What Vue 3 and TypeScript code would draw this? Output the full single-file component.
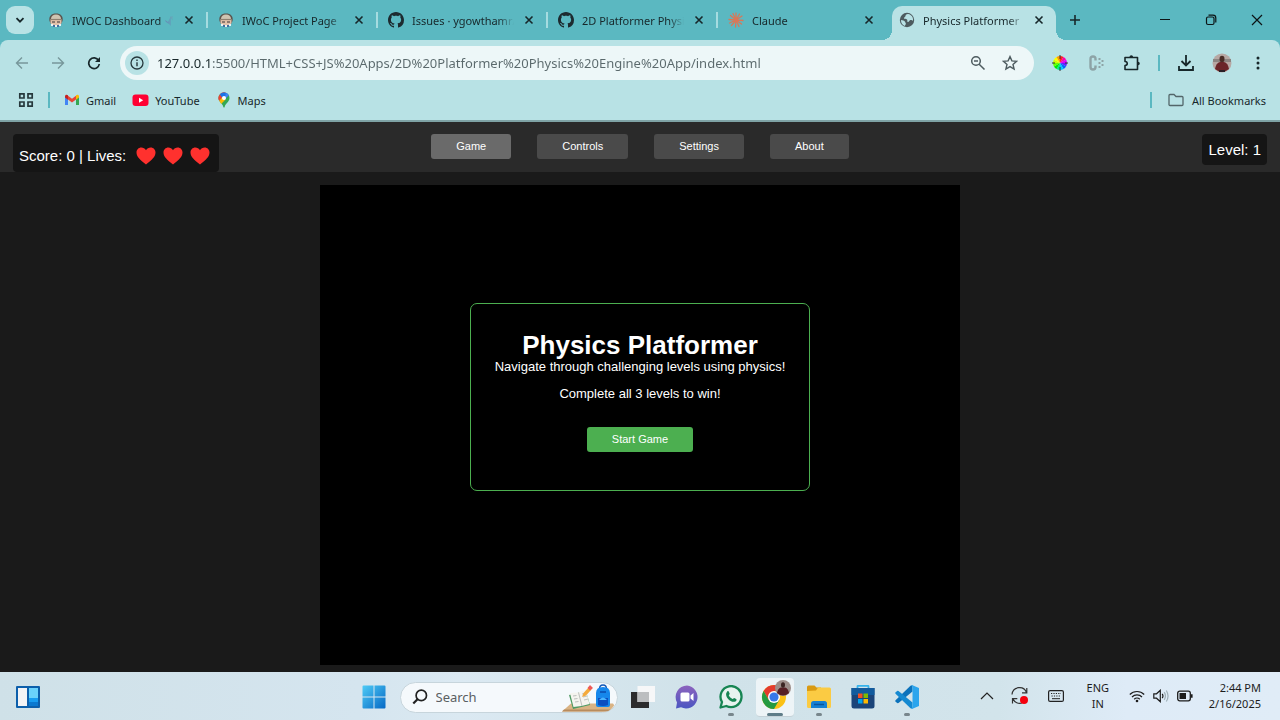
<script setup lang="ts">
import { ref } from 'vue'

interface Tab {
  title: string
  icon: 'iwoc' | 'github' | 'claude' | 'globe'
  party?: boolean
}

const tabs: Tab[] = [
  { title: 'IWOC Dashboard', icon: 'iwoc', party: true },
  { title: 'IWoC Project Page', icon: 'iwoc' },
  { title: 'Issues · ygowthamr/JS-Apps', icon: 'github' },
  { title: '2D Platformer Physics Engine', icon: 'github' },
  { title: 'Claude', icon: 'claude' },
  { title: 'Physics Platformer', icon: 'globe' },
]
const activeTab = ref(5)

const url = ref('127.0.0.1:5500/HTML+CSS+JS%20Apps/2D%20Platformer%20Physics%20Engine%20App/index.html')
const search = ref('')

const sections = ['Game', 'Controls', 'Settings', 'About']
const section = ref('Game')
const score = ref(0)
const lives = ref(3)
const level = ref(1)

const wheel = ['#f22', '#f0a', '#d0f', '#62f', '#06f', '#0cf', '#0e8', '#0e0', '#6f0', '#cf0', '#ff0', '#f90']
function wedge(i: number): string {
  const a = (i * Math.PI) / 6
  const b = ((i + 1) * Math.PI) / 6
  return `M8 8L${8 + 7 * Math.sin(a)} ${8 - 7 * Math.cos(a)}A7 7 0 0 1 ${8 + 7 * Math.sin(b)} ${8 - 7 * Math.cos(b)}Z`
}
</script>

<template>
  <div class="desktop">
    <header class="browser">
      <div class="tabstrip">
        <button class="tab-search" aria-label="Search tabs">
          <svg width="12" height="12" viewBox="0 0 12 12"><path d="M2.5 4.2L6 7.7l3.5-3.5" fill="none" stroke="#17272a" stroke-width="1.8" /></svg>
        </button>
        <div class="tabs">
          <div v-for="(t, i) in tabs" :key="i" class="tab" :class="{ active: i === activeTab, divided: i < tabs.length - 2 }">
            <button class="tab-main" @click="activeTab = i">
              <svg v-if="t.icon === 'iwoc'" class="fav" viewBox="0 0 16 16">
                <path d="M1.500 9C.5 4 3.500 1.500 8 1.500S15.500 4 14.500 9l-1.500 3H3z" fill="#5a534d" />
                <path d="M3 7c0-3 2-4.500 5-4.500S13 4 13 7z" fill="#cfc4b2" />
                <path d="M2.500 7.500h11v3.500c-1 2-3 3-5.500 3s-4.500-1-5.500-3z" fill="#e3c0a8" />
                <path d="M2 7.500h12" stroke="#8f8070" stroke-width="1.200" />
                <path d="M4 10h3M9 10h3" stroke="#393439" stroke-width="1.200" />
                <path d="M3 12h2v2H3zM7 13h2v2H7zM11 12h2v2h-2z" fill="#e9f1f3" />
                <path d="M5 13h2v2H5zM9 13h2v2H9z" fill="#416fa0" />
              </svg>
              <svg v-else-if="t.icon === 'github'" class="fav" viewBox="0 0 16 16">
                <path fill="#1d2b30" d="M8 0C3.580 0 0 3.580 0 8c0 3.540 2.290 6.530 5.470 7.590.4.070.55-.17.55-.38 0-.19-.01-.82-.01-1.490-2.010.37-2.530-.49-2.690-.94-.09-.23-.48-.94-.82-1.130-.28-.15-.68-.52-.01-.53.63-.01 1.080.58 1.230.82.72 1.210 1.870.87 2.330.66.07-.52.28-.87.51-1.070-1.780-.2-3.640-.89-3.640-3.950 0-.87.31-1.590.82-2.150-.08-.2-.36-1.020.08-2.120 0 0 .67-.21 2.200.82.64-.18 1.320-.27 2-.27s1.360.09 2 .27c1.530-1.040 2.200-.82 2.200-.82.44 1.100.16 1.920.08 2.120.51.56.82 1.270.82 2.150 0 3.070-1.870 3.750-3.650 3.950.29.25.54.73.54 1.480 0 1.070-.01 1.930-.01 2.200 0 .21.15.46.55.38A8.010 8.010 0 0 0 16 8c0-4.420-3.580-8-8-8z" />
              </svg>
              <svg v-else-if="t.icon === 'claude'" class="fav" viewBox="0 0 16 16">
                <path d="M8 8V1M8 8l3.500-6M8 8l6-4M8 8l7 .5M8 8l5.500 4M8 8l3 6.500M8 8l-.5 7M8 8l-4.500 5.500M8 8l-6.500 3M8 8L1 7.500M8 8L2.500 3.500M8 8L5 1.500" stroke="#d97757" stroke-width="1.300" stroke-linecap="round" />
              </svg>
              <svg v-else class="fav" viewBox="0 0 16 16">
                <circle cx="8" cy="8" r="7.200" fill="#4d5b5f" />
                <path d="M9 2c-2 0-2.500 1-2.500 2S5 5 5 6.200s2 .3 3 1.300-.5 2 .8 2.500 1-1.500 2.200-1.800 2.500.3 3 .8c.5-3-1-6.500-5-7zM2 8c1.500.2 3.500.5 4 1.800s1 1.200.8 2.200-.8 1-1 2C3.500 13 1.800 11 2 8z" fill="#b8e2e5" />
              </svg>
              <span class="tab-title">{{ t.title }}<svg v-if="t.party" class="party" viewBox="0 0 10 12"><path d="M0 5l3 2 3-6v10L4 9 1 7z" fill="#7361ab" /><path d="M5 2l3-1v5z" fill="#a14f8d" /></svg></span>
            </button>
            <button class="tab-close" aria-label="Close tab">
              <svg width="10" height="10" viewBox="0 0 10 10"><path d="M1.500 1.500l7 7M8.500 1.500l-7 7" stroke="#17272a" stroke-width="1.600" /></svg>
            </button>
          </div>
        </div>
        <button class="new-tab" aria-label="New tab">
          <svg width="12" height="12" viewBox="0 0 12 12"><path d="M6 1v10M1 6h10" stroke="#17272a" stroke-width="1.600" /></svg>
        </button>
        <div class="window-controls">
          <button aria-label="Minimize"><svg width="12" height="12" viewBox="0 0 12 12"><path d="M1 5.500h10" stroke="#0c1416" /></svg></button>
          <button aria-label="Restore"><svg width="12" height="12" viewBox="0 0 12 12" fill="none" stroke="#0c1416" stroke-width="1.200"><rect x="1.500" y="3" width="7.500" height="7.500" rx="1.500" /><path d="M3.500 1.200h4.500q2.800 0 2.800 2.800v4.500" /></svg></button>
          <button aria-label="Close window"><svg width="12" height="12" viewBox="0 0 12 12"><path d="M1 1l10 10M11 1L1 11" stroke="#0c1416" stroke-width="1.200" /></svg></button>
        </div>
      </div>

      <div class="toolbar">
        <div class="nav-actions">
          <button aria-label="Back"><svg width="14" height="14" viewBox="0 0 14 14" fill="none" stroke="#77979b" stroke-width="1.400"><path d="M13 7H2M7 1.500L1.500 7 7 12.500" /></svg></button>
          <button aria-label="Forward"><svg width="14" height="14" viewBox="0 0 14 14" fill="none" stroke="#77979b" stroke-width="1.400"><path d="M1 7h11M7 1.500L12.500 7 7 12.500" /></svg></button>
          <button aria-label="Reload"><svg width="14" height="14" viewBox="0 0 14 14"><path d="M11.600 4.500A5.300 5.300 0 1 0 12.300 8" fill="none" stroke="#17272a" stroke-width="1.700" /><path d="M13 1v5H8z" fill="#17272a" /></svg></button>
        </div>
        <div class="omnibox">
          <button class="site-info" aria-label="View site information">
            <svg width="14" height="14" viewBox="0 0 14 14"><circle cx="7" cy="7" r="6" fill="none" stroke="#26383c" stroke-width="1.300" /><path d="M7 6.200v4M7 3.500v1.400" stroke="#26383c" stroke-width="1.400" /></svg>
          </button>
          <input v-model="url" class="url" type="text" aria-label="Address" spellcheck="false" />
          <button aria-label="Zoom"><svg width="16" height="16" viewBox="0 0 16 16" fill="none" stroke="#4d5b5f" stroke-width="1.500"><circle cx="6" cy="6" r="4.300" /><path d="M9.200 9.200l5.300 5.300M4 6h4" /></svg></button>
          <button aria-label="Bookmark this tab"><svg width="16" height="16" viewBox="0 0 16 16"><path d="M8 1.600l1.900 4.300 4.700.4-3.600 3.100 1.100 4.600L8 11.600 3.900 14 5 9.400 1.400 6.300l4.700-.4z" fill="none" stroke="#4d5b5f" stroke-width="1.400" /></svg></button>
        </div>
        <div class="extensions">
          <button aria-label="Color picker"><svg width="16" height="16" viewBox="0 0 16 16"><path v-for="(c, i) in wheel" :key="c" :d="wedge(i)" :fill="c" /><path d="M8 0v4M8 12v4M0 8h3M13 8h3" stroke="#333" /></svg></button>
          <button aria-label="Coding extension"><svg width="16" height="16" viewBox="0 0 16 16"><path d="M7.500 5.500V4Q7.500 1.500 5 1.500T2.500 4v8q0 2.500 2.500 2.500T7.500 12v-1.500" fill="none" stroke="#8da3a6" stroke-width="2.400" /><path d="M10.500 4h2M10.500 8h2M10.500 12h2M13.500 6h2M13.500 10h2" stroke="#8da3a6" stroke-width="2" /></svg></button>
          <button aria-label="Extensions"><svg width="18" height="18" viewBox="0 0 18 18"><path d="M2 3.500h12.500v12H2v-4c3-.2 3-3.800 0-4z" fill="none" stroke="#17272a" stroke-width="1.600" stroke-linejoin="round" /><path d="M6.500 3a1.800 1.800 0 0 1 3.600 0zM15 7.700a1.800 1.800 0 0 1 0 3.600z" fill="#17272a" /></svg></button>
          <span class="rule"></span>
          <button aria-label="Downloads"><svg width="18" height="18" viewBox="0 0 18 18" fill="none" stroke="#17272a" stroke-width="1.800"><path d="M9 1v10M4.500 7L9 11.500 13.500 7M2 12v4h14v-4" /></svg></button>
          <button aria-label="Profile">
            <svg width="20" height="20" viewBox="0 0 20 20"><circle cx="10" cy="10" r="9.500" fill="#b7a8a4" /><path d="M1 6h18v3H1z" fill="#8d8582" /><path d="M3 16q1-6 5-7h4q4 1 5 7-7 6-14 0z" fill="#6b2529" /><path d="M7 17h6v2H7z" fill="#292026" /><ellipse cx="10" cy="6" rx="2.500" ry="3.300" fill="#4a2d27" /></svg>
          </button>
          <button aria-label="Menu"><svg width="4" height="16" viewBox="0 0 4 16" fill="#17272a"><circle cx="2" cy="3" r="1.500" /><circle cx="2" cy="8" r="1.500" /><circle cx="2" cy="13" r="1.500" /></svg></button>
        </div>
      </div>

      <nav class="bookmarks" aria-label="Bookmarks">
        <button class="apps" aria-label="Apps"><svg width="16" height="16" viewBox="0 0 16 16" fill="none" stroke="#26383c" stroke-width="1.700"><path d="M1.800 1.800h4.200v4.200h-4.200zM10 1.800h4.200v4.200H10zM1.800 10h4.200v4.200h-4.200zM10 10h4.200v4.200H10z" /></svg></button>
        <span class="rule"></span>
        <a href="#gmail" class="bm-gmail"><svg width="16" height="16" viewBox="0 0 16 16"><path d="M1 4v9h3V6z" fill="#4285f4" /><path d="M12 6v7h3V4z" fill="#34a853" /><path d="M4 3.800l4 3 4-3v3.800l-4 3-4-3z" fill="#ea4335" /><path d="M1 4.500C1 2.500 2.800 2.200 4 3.300v4.400L1 5.500z" fill="#c5221f" /><path d="M15 4.500c0-2-1.800-2.300-3-1.200v4.400l3-2.200z" fill="#fbbc04" /></svg>Gmail</a>
        <a href="#youtube" class="bm-youtube"><svg width="17" height="16" viewBox="0 0 17 16"><rect x="0.500" y="2.500" width="16" height="11.500" rx="3" fill="#ff0033" /><path d="M7 5.700v5l4.200-2.500z" fill="#fff" /></svg>YouTube</a>
        <a href="#maps" class="bm-maps"><svg width="16" height="16" viewBox="0 0 16 16"><path d="M8 .5a5.500 5.500 0 0 0-5.500 5.500c0 4 4.500 5.500 4.800 9q.7 1 1.400 0c.3-3.500 4.800-5 4.800-9A5.500 5.500 0 0 0 8 .5z" fill="#34a853" /><path d="M3.300 9L10.500.9A5.500 5.500 0 0 0 3.800 2.400 5.500 5.500 0 0 0 3.300 9z" fill="#ea4335" /><path d="M3.800 2.400A5.500 5.500 0 0 1 12.800 3.300L8 8z" fill="#1a73e8" /><path d="M9.800.7l3 2.600L9 7z" fill="#4285f4" /><path d="M3.300 8.800L6.500 5l3 2.600-4.300 4.300z" fill="#fbbc04" /><circle cx="8" cy="6" r="2" fill="#fff" /></svg>Maps</a>
        <span class="rule push"></span>
        <button class="all"><svg width="16" height="14" viewBox="0 0 16 14"><path d="M1 12V2.500Q1 1.500 2 1.500h4l2 2h6q1 0 1 1V11.500q0 1-1 1H2q-1 0-1-1z" fill="none" stroke="#53666a" stroke-width="1.300" /></svg>All Bookmarks</button>
      </nav>
    </header>

    <main class="page">
      <div class="hud">
        <div class="stat score">
          Score: {{ score }} | Lives:
          <span class="hearts">
            <svg v-for="n in lives" :key="n" viewBox="0 0 20 18"><path d="M10 17.500C4 13 .5 9.800.5 5.600.5 2.800 2.600.6 5.300.6c1.900 0 3.700 1 4.700 2.600 1-1.600 2.800-2.600 4.700-2.600 2.700 0 4.800 2.200 4.800 5 0 4.200-3.500 7.400-9.500 11.900z" fill="#ff312e" /></svg>
          </span>
        </div>
        <nav class="menu" aria-label="Game menu">
          <button v-for="s in sections" :key="s" :class="{ on: s === section }" @click="section = s">{{ s }}</button>
        </nav>
        <div class="stat level">Level: {{ level }}</div>
      </div>
      <canvas class="stage" width="640" height="480"></canvas>
      <div class="overlay">
        <section class="card">
          <h1>Physics Platformer</h1>
          <p>Navigate through challenging levels using physics!</p>
          <p>Complete all 3 levels to win!</p>
          <button class="start">Start Game</button>
        </section>
      </div>
    </main>

    <footer class="taskbar">
      <div class="widgets">
        <button aria-label="Widgets"><svg width="24" height="22" viewBox="0 0 24 22"><rect width="24" height="22" rx="1" fill="#0d5fab" /><path d="M2 2h9v18H2z" fill="#f3f3f5" /><path d="M13 2h9v10h-9z" fill="#6bd2fb" /><path d="M13 12h9v4h-9z" fill="#189df1" /><path d="M13 16h9v4h-9z" fill="#0b79d0" /></svg></button>
      </div>
      <div class="dock">
        <button class="app" aria-label="Start">
          <svg width="24" height="24" viewBox="0 0 24 24"><defs><linearGradient id="win" x1="0" y1="0" x2="1" y2="1"><stop offset="0" stop-color="#4fcbf6" /><stop offset="1" stop-color="#0568c5" /></linearGradient></defs><path d="M1.500.5H11.500V11.500H.5V1.500q0-1 1-1zM12.500.5H22.500q1 0 1 1V11.500H12.500zM.5 12.500H11.500V23.500H1.500q-1 0-1-1zM12.500 12.500H23.500V22.500q0 1-1 1H12.500z" fill="url(#win)" /></svg>
        </button>
        <div class="search">
          <svg class="glass" width="16" height="16" viewBox="0 0 16 16" fill="none" stroke="#222"><circle cx="9.300" cy="6.400" r="5.200" stroke-width="1.700" /><path d="M5.500 10.300L1.300 14.600" stroke-width="2.200" /></svg>
          <input v-model="search" type="text" placeholder="Search" aria-label="Search" />
          <svg class="scene" width="52" height="29" viewBox="0 0 52 29"><path d="M0 28.500l9-8h42q1 1 1 2-2 4-5 6z" fill="#d9b384" /><path d="M0 28.500l2-2h47l-2 2z" fill="#b88b5d" /><path d="M7 12l17-4 4 14-17 4z" fill="#4e9a63" /><path d="M8 10l8-.5 8-2.500 3.500 14-8 2-8 1z" fill="#f5f4ef" /><path d="M16.500 9.500L20 23M11 13l3.500-.5M12 16l3.500-.5M13 19l3.500-.5M20 11l4-1M21 14l4-1M22 17l4-1" stroke="#adb1ae" stroke-width=".8" /><path d="M20 14l1.500-4L27 4l2.500 2.500-5.500 6z" fill="#f4aa3b" /><path d="M25.500 5L28 2l3 3-3 2.500z" fill="#ee5a57" /><path d="M37.500 6q0-4 3.500-4t3.500 4" fill="none" stroke="#1459b8" stroke-width="1.500" /><path d="M34 22V10q0-6 7-6t7 6v12q0 2-2 2H36q-2 0-2-2z" fill="#1687eb" /><path d="M36 15h10v7q-5 2-10 0z" fill="#0d4fc0" /><path d="M37 17q4-5 8 0" fill="#4cb5ff" /><path d="M38 9h6" stroke="#0b4bae" stroke-width="1.500" /></svg>
        </div>
        <button class="app" aria-label="Task view"><svg width="24" height="24" viewBox="0 0 24 24"><path d="M0 7h18v16H0z" fill="#2c2c2d" /><path d="M6.500 1H24v16H6.500z" fill="#f6f7f8" /><path d="M6.500 7H18v10H6.500z" fill="#bcbec0" /></svg></button>
        <button class="app" aria-label="Chat"><svg width="24" height="24" viewBox="0 0 24 24"><defs><linearGradient id="chat" x1="0" y1="0" x2="0" y2="1"><stop offset="0" stop-color="#8d63bd" /><stop offset="1" stop-color="#4b56c2" /></linearGradient></defs><path d="M12 .5A11.500 11.500 0 1 1 6 22.300L1 23.500 2 17.500A11.500 11.500 0 0 1 12 .5z" fill="url(#chat)" /><rect x="5.500" y="7.500" width="9" height="9" rx="1.500" fill="#fff" /><path d="M15.500 10.500l3-2.500v8l-3-2.500z" fill="#fff" /></svg></button>
        <button class="app open" aria-label="WhatsApp"><svg width="24" height="24" viewBox="0 0 24 24"><path d="M1.500 22.500l1.500-5.500A10.500 10.500 0 1 1 7.300 21z" fill="#e7f3ef" stroke="#178553" stroke-width="2.300" stroke-linejoin="round" /><path d="M8.200 6.500c.8-.8 1.500-.2 1.700.3l.8 2c.1.500-.8 1.300-.9 1.500.8 1.800 2 2.900 3.900 3.700.3 0 1-1.200 1.500-1.100l2 1c.7.300.3 1.900-.8 2.500-3.800 2-10.300-3.600-9.200-8.200z" fill="#178553" /></svg></button>
        <button class="app open current" aria-label="Chrome">
          <svg width="32" height="32" viewBox="0 0 32 32"><circle cx="15" cy="17" r="12" fill="#fbc116" /><path d="M4.600 11A12 12 0 0 1 25.400 11H15L9.800 20z" fill="#e33b2e" /><path d="M4.600 11A12 12 0 0 0 15 29l5.200-9H9.800z" fill="#249a41" /><circle cx="15" cy="17" r="6" fill="#fff" /><circle cx="15" cy="17" r="4.600" fill="#3878e8" /><circle cx="24" cy="8" r="8" fill="#9c8d89" /><path d="M18 13q1-5 4-5.500h4q3 .5 4 5.500-6 5-12 0z" fill="#571f24" /><ellipse cx="24" cy="5" rx="2" ry="2.800" fill="#3b2422" /></svg>
        </button>
        <button class="app open" aria-label="File Explorer"><svg width="24" height="24" viewBox="0 0 24 24"><path d="M0 2q0-1.500 1.500-1.500h6l2 2H14V8H0z" fill="#d99a12" /><path d="M0 6l9-.5 2-3h11.500Q24 2.500 24 4v17.500q0 1.500-1.500 1.500h-21Q0 23 0 21.500z" fill="#fbcb43" /><path d="M4 23v-4.500q0-2.500 2.500-2.500h11q2.500 0 2.500 2.500V23z" fill="#1680d4" /><path d="M7 19.500h10" stroke="#0b559d" stroke-width="1.500" /></svg></button>
        <button class="app" aria-label="Microsoft Store"><svg width="24" height="24" viewBox="0 0 24 24"><path d="M6.500 5V1.500Q6.500.8 7.200.8h9.600q.7 0 .7.700V5" fill="none" stroke="#35b3ec" stroke-width="1.800" /><path d="M.5 3h23v18q0 2.500-2.500 2.500H3Q.5 23.500.5 21z" fill="#1b4479" /><path d="M.5 3h23v7h-23z" fill="#125b9d" /><path d="M7 8.500h4.500V13H7z" fill="#f25022" /><path d="M12.500 8.500H17V13h-4.500z" fill="#7fba00" /><path d="M7 14h4.500v4.500H7z" fill="#00a4ef" /><path d="M12.500 14H17v4.500h-4.500z" fill="#ffb900" /></svg></button>
        <button class="app open" aria-label="Visual Studio Code"><svg width="24" height="24" viewBox="0 0 24 24"><path d="M17.500 6.500L3.500 18l-1 .2L.3 16.500v-1L15.500.8 17.500.2z" fill="#0b72bb" /><path d="M17.500 17.500L3.500 6l-1-.2L.3 7.500v1l15.200 14.700 2 .6z" fill="#1489d1" /><path d="M17.500.2L24 3v18l-6.500 2.800-2-.6q2 .5 2-1.700v-19q0-2.200-2-1.700z" fill="#2ba5ed" /></svg></button>
      </div>
      <div class="tray">
        <button class="chevron" aria-label="Show hidden icons"><svg width="14" height="8" viewBox="0 0 14 8"><path d="M1 7l6-6 6 6" fill="none" stroke="#222" stroke-width="1.200" /></svg></button>
        <button class="sync" aria-label="Update available"><svg width="20" height="20" viewBox="0 0 20 20" fill="none" stroke="#333" stroke-width="1.200"><path d="M2 8.500A7.500 7.500 0 0 1 16.500 6.500M16.800 2v4.800H12M2.500 17.500v-4.800h4.800M3 13a7.500 7.500 0 0 0 9 4" /><circle cx="14" cy="14" r="4" fill="#f5000d" stroke="none" /></svg></button>
        <button class="keyboard" aria-label="Touch keyboard"><svg width="16" height="12" viewBox="0 0 16 12" fill="none" stroke="#222"><rect x=".6" y=".6" width="14.800" height="10.800" rx="1.500" stroke-width="1.200" /><path d="M3 3.500h10M3.500 6h9" stroke-dasharray="1.200 1.200" stroke-width="1.200" /><path d="M4 8.700h8" /></svg></button>
        <button class="lang"><span>ENG</span><span>IN</span></button>
        <button class="status" aria-label="Network, volume and battery">
          <svg width="16" height="14" viewBox="0 0 16 14" fill="none" stroke="#1c1c1c" stroke-width="1.200"><path d="M.8 5.500a10.200 10.200 0 0 1 14.400 0M3 8a7.100 7.100 0 0 1 10 0M5.200 10.300a4 4 0 0 1 5.600 0" /><circle cx="8" cy="12" r="1.300" fill="#1c1c1c" stroke="none" /></svg>
          <svg width="16" height="14" viewBox="0 0 16 14" fill="none" stroke="#1c1c1c" stroke-width="1.200"><path d="M.8 4.800h2.700L7.300 1.300v11.400L3.500 9.200H.8zM9.200 4.800q1.500 2.200 0 4.400" /><path d="M11.200 3.200q2.500 3.800 0 7.600M13.300 1.500q3.500 5.500 0 11" stroke="#9fb0b8" /></svg>
          <svg width="16" height="12" viewBox="0 0 16 12"><rect x=".7" y="1.200" width="12.600" height="9.600" rx="2" fill="none" stroke="#1c1c1c" stroke-width="1.300" /><path d="M2.500 3H9v6H2.500zM14 4.200h1.600v3.600H14z" fill="#1c1c1c" /></svg>
        </button>
        <button class="clock"><span>2:44 PM</span><span>2/16/2025</span></button>
      </div>
    </footer>
  </div>
</template>

<style>
body {
  background: #1a1a1a;
}
</style>

<style scoped>
* {
  box-sizing: border-box;
}
button {
  border: 0;
  padding: 0;
  margin: 0;
  background: none;
  font: inherit;
  color: inherit;
  display: flex;
  align-items: center;
  justify-content: center;
}
input {
  border: 0;
  padding: 0;
  outline: 0;
  background: none;
  font: inherit;
  min-width: 0;
}
svg {
  display: block;
  flex: none;
}
.desktop {
  display: flex;
  flex-direction: column;
  min-height: 100vh;
  font-family: "Noto Sans", "Open Sans", sans-serif;
  font-size: 11px;
  color: #17272a;
}

/* Browser frame */
.browser {
  background: #5bb8c1;
  border-bottom: 2px solid #7fa3a6;
}
.tabstrip {
  display: flex;
  align-items: center;
  height: 40px;
  padding-left: 6px;
}
.tab-search {
  width: 28px;
  height: 28px;
  border-radius: 9px;
  background: #b8e2e5;
  margin-right: 4px;
}
.tabs {
  display: flex;
  align-self: stretch;
  flex: 0 1 1018px;
  min-width: 0;
}
.tab {
  position: relative;
  display: flex;
  align-items: center;
  flex: 0 1 170px;
  min-width: 0;
  padding: 0 14px 0 10px;
}
.tab.divided::after {
  content: "";
  position: absolute;
  right: 0;
  top: 12px;
  width: 2px;
  height: 16px;
  background: #a5dce0;
}
.tab.active {
  align-self: flex-end;
  flex-basis: 164px;
  height: 34px;
  margin-left: 4px;
  padding: 0 12px 6px 7px;
  border-radius: 10px 10px 0 0;
  background: #b8e2e5;
}
.tab.active::before,
.tab.active::after {
  content: "";
  position: absolute;
  bottom: 0;
  width: 10px;
  height: 10px;
}
.tab.active::before {
  right: 100%;
  background: radial-gradient(circle at 0 0, transparent 10px, #b8e2e5 10px);
}
.tab.active::after {
  left: 100%;
  background: radial-gradient(circle at 100% 0, transparent 10px, #b8e2e5 10px);
}
.tab-main {
  flex: 1;
  min-width: 0;
  justify-content: flex-start;
  gap: 8px;
}
.fav {
  width: 16px;
  height: 16px;
}
.tab-title {
  display: flex;
  align-items: center;
  flex: 1;
  overflow: hidden;
  white-space: nowrap;
  line-height: 20px;
  padding-top: 1px;
  mask-image: linear-gradient(90deg, #000 85%, transparent);
}
.party {
  width: 10px;
  height: 12px;
  margin-left: 4px;
}
.tab-close {
  width: 10px;
  height: 20px;
  margin-left: 10px;
}
.new-tab {
  width: 28px;
  height: 28px;
  margin-left: 5px;
}
.window-controls {
  display: flex;
  margin-left: auto;
}
.window-controls button {
  width: 46px;
  height: 40px;
}
.toolbar {
  display: flex;
  align-items: center;
  gap: 8px;
  height: 46px;
  padding: 0 4px;
  border-radius: 8px 8px 0 0;
  background: #b8e2e5;
}
.nav-actions {
  display: flex;
}
.nav-actions button {
  width: 36px;
  height: 34px;
}
.omnibox {
  display: flex;
  align-items: center;
  flex: 1;
  min-width: 0;
  height: 34px;
  padding: 0 8px 0 5px;
  border-radius: 17px;
  background: #edf7f8;
}
.omnibox button {
  width: 32px;
  height: 24px;
}
.omnibox .site-info {
  width: 24px;
  border-radius: 12px;
  background: #b8e2e5;
}
.url {
  flex: 1;
  height: 24px;
  margin-left: 8px;
  font-size: 13px;
  color: transparent;
  caret-color: #17272a;
  background: linear-gradient(90deg, #17272a 54px, #5a696c 54px);
  background-clip: text;
}
.extensions {
  display: flex;
  align-items: center;
}
.extensions button {
  width: 36px;
  height: 28px;
}
.rule {
  width: 2px;
  height: 16px;
  background: #5bb8c1;
}
.extensions .rule {
  margin: 0 8px;
}
.bookmarks {
  display: flex;
  align-items: center;
  height: 34px;
  padding: 0 14px 6px 18px;
  background: #b8e2e5;
}
.bookmarks a {
  display: flex;
  align-items: center;
  color: inherit;
  text-decoration: none;
}
.bookmarks .apps {
  margin-right: 14px;
}
.bm-gmail {
  gap: 6px;
  margin-left: 14px;
}
.bm-youtube {
  gap: 6px;
  margin-left: 16px;
}
.bm-maps {
  gap: 6px;
  margin-left: 16px;
}
.push {
  margin-left: auto;
}
.all {
  gap: 8px;
  margin-left: 16px;
}

/* Game page */
.page {
  position: relative;
  flex: 1;
  display: flex;
  flex-direction: column;
  background: #1a1a1a;
  color: #fff;
  font-family: "Liberation Sans", Arial, sans-serif;
}
.hud {
  display: grid;
  grid-template-columns: 1fr auto 1fr;
  align-items: start;
  padding: 12px 13px 0;
  min-height: 50px;
  background: #2a2a2a;
}
.stat {
  display: flex;
  align-items: center;
  border-radius: 4px;
  background: #151515;
  font-size: 15px;
  padding: 0 6px;
}
.score {
  justify-self: start;
  height: 38px;
  padding-top: 5px;
  gap: 10px;
}
.level {
  justify-self: end;
  height: 31px;
}
.hearts {
  display: flex;
  gap: 7px;
  padding-right: 3px;
}
.hearts svg {
  width: 20px;
  height: 18px;
}
.menu {
  display: flex;
  gap: 26px;
}
.menu button,
.start {
  height: 25px;
  padding: 0 25px 1px;
  border-radius: 3px;
  background: #4a4a4a;
  color: #fff;
  font-size: 11px;
}
.menu button.on {
  background: #6a6a6a;
}
.stage {
  display: block;
  width: 50%;
  aspect-ratio: 4 / 3;
  margin: 13px auto 7px;
  background: #000;
}
.overlay {
  position: absolute;
  inset: 0;
  display: flex;
  align-items: center;
  justify-content: center;
  pointer-events: none;
}
.card {
  display: flex;
  flex-direction: column;
  align-items: center;
  padding: 26px 24px 38px;
  border: 1px solid #4caf50;
  border-radius: 7px;
  background: #000;
  text-align: center;
  pointer-events: auto;
}
.card h1 {
  margin: 0;
  font-size: 26px;
  line-height: 30px;
}
.card p {
  margin: 0 0 13px;
  font-size: 13px;
  line-height: 14px;
}
.start {
  margin-top: 13px;
  background: #4caf50;
}

/* Taskbar */
.taskbar {
  display: grid;
  grid-template-columns: 1fr auto 1fr;
  align-items: center;
  height: 48px;
  background: linear-gradient(90deg, #cfe1e8, #d5e5ef 28%, #dbe9f2 36%, #d0e2e9 55%, #d2e4eb 78%, #deebf7 88%, #e0ecf7);
  color: #1c1c1c;
}
.widgets {
  padding: 2px 0 0 16px;
}
.dock {
  display: flex;
  align-items: center;
}
.app {
  position: relative;
  width: 44px;
  height: 48px;
  padding-top: 2px;
}
.app.open::after {
  content: "";
  position: absolute;
  left: 19px;
  bottom: 4px;
  width: 6px;
  height: 3px;
  border-radius: 2px;
  background: #78868c;
}
.app.current::before {
  content: "";
  position: absolute;
  inset: 6px 3px 3px;
  border-radius: 4px;
  background: #edf4f7;
  border-bottom: 1px solid #c5d2d8;
}
.app.current::after {
  left: 14px;
  width: 16px;
  background: #5f7d88;
}
.app.current {
  padding: 0;
}
.app.current svg {
  position: relative;
}
.search {
  display: flex;
  align-items: center;
  width: 218px;
  height: 31px;
  margin: 2px 3px 0 4px;
  padding-left: 11px;
  border: 1px solid #c7d5dc;
  border-radius: 16px;
  background: #f5f9fc;
  overflow: hidden;
}
.search input {
  flex: 1;
  height: 28px;
  margin-left: 8px;
  font-size: 13px;
}
.search input::placeholder {
  color: #5a5f62;
  opacity: 1;
}
.scene {
  margin-right: 3px;
}
.tray {
  display: flex;
  align-items: center;
  justify-content: flex-end;
  padding-right: 19px;
}
.chevron {
  width: 32px;
  height: 40px;
}
.sync {
  width: 34px;
  height: 40px;
}
.keyboard {
  width: 38px;
  height: 40px;
}
.lang,
.clock {
  flex-direction: column;
  line-height: 16px;
}
.lang {
  width: 46px;
}
.status {
  gap: 8px;
  height: 40px;
  margin-left: 8px;
  margin-right: 16px;
}
.clock {
  align-items: flex-end;
}
</style>
